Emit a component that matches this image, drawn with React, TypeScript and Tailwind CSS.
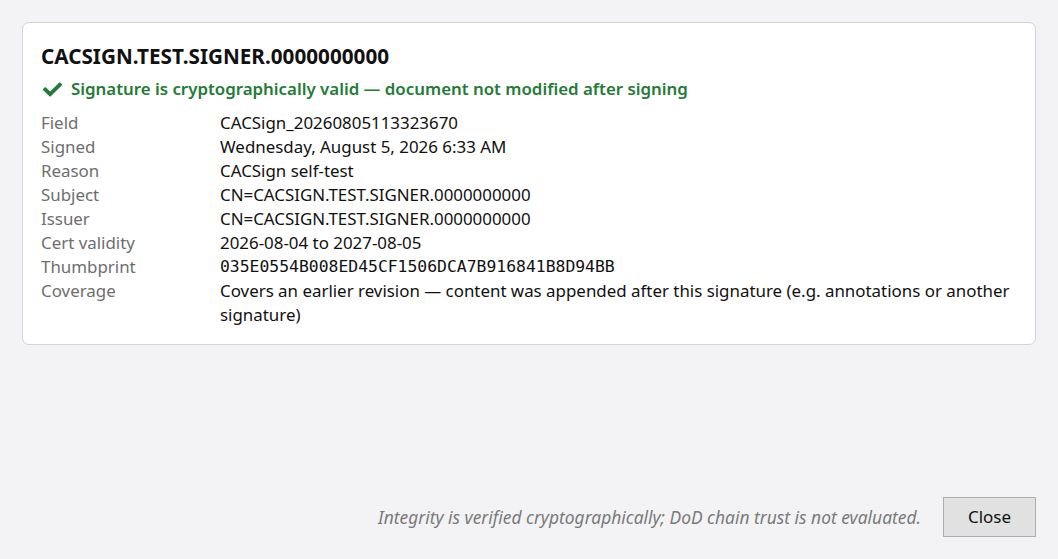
import { FaCheck } from "react-icons/fa";

const rows: [string, string, boolean?][] = [
  ["Field", "CACSign_20260805113323670"],
  ["Signed", "Wednesday, August 5, 2026 6:33 AM"],
  ["Reason", "CACSign self-test"],
  ["Subject", "CN=CACSIGN.TEST.SIGNER.0000000000"],
  ["Issuer", "CN=CACSIGN.TEST.SIGNER.0000000000"],
  ["Cert validity", "2026-08-04 to 2027-08-05"],
  ["Thumbprint", "035E0554B008ED45CF1506DCA7B916841B8D94BB", true],
  [
    "Coverage",
    "Covers an earlier revision — content was appended after this signature (e.g. annotations or another signature)",
  ],
];

export default function App() {
  return (
    <div className="h-[559px] w-[1058px] bg-[#f3f3f5] flex flex-col justify-between px-[22px] pt-[22px] pb-[22px] font-['Noto_Sans',sans-serif]">
      <div className="bg-white border border-[#d2d2d8] rounded-[7px] pl-[18px] pr-[20px] pt-[18px] pb-[17px]">
        <h1 className="text-[20.7px] font-bold leading-[30px] text-[#111]">
          CACSIGN.TEST.SIGNER.0000000000
        </h1>
        <div className="flex items-center gap-[9px] mt-[5px] text-[16.85px] font-semibold leading-[26px] text-[#237b35]">
          <FaCheck className="w-[19px] h-[19px] ml-[2px]" />
          <span>Signature is cryptographically valid — document not modified after signing</span>
        </div>
        <div className="mt-[9px] grid grid-cols-[179px_1fr] text-[16.9px] leading-[24px]">
          {rows.map(([label, value, mono]) => (
            <div key={label} className="contents">
              <div className="text-[#6e6e6e]">{label}</div>
              <div
                className={
                  mono
                    ? "text-[#111] font-['DejaVu_Sans_Mono',monospace] text-[16.4px]"
                    : "text-[#111]"
                }
              >
                {value}
              </div>
            </div>
          ))}
        </div>
      </div>
      <div className="flex items-center justify-end gap-[22px] mt-auto">
        <span className="italic text-[17.4px] text-[#7a7a7a]">
          Integrity is verified cryptographically; DoD chain trust is not evaluated.
        </span>
        <button className="w-[93px] h-[40px] bg-[#e1e1e1] border border-[#adadad] text-[17px] text-[#111]">
          Close
        </button>
      </div>
    </div>
  );
}
